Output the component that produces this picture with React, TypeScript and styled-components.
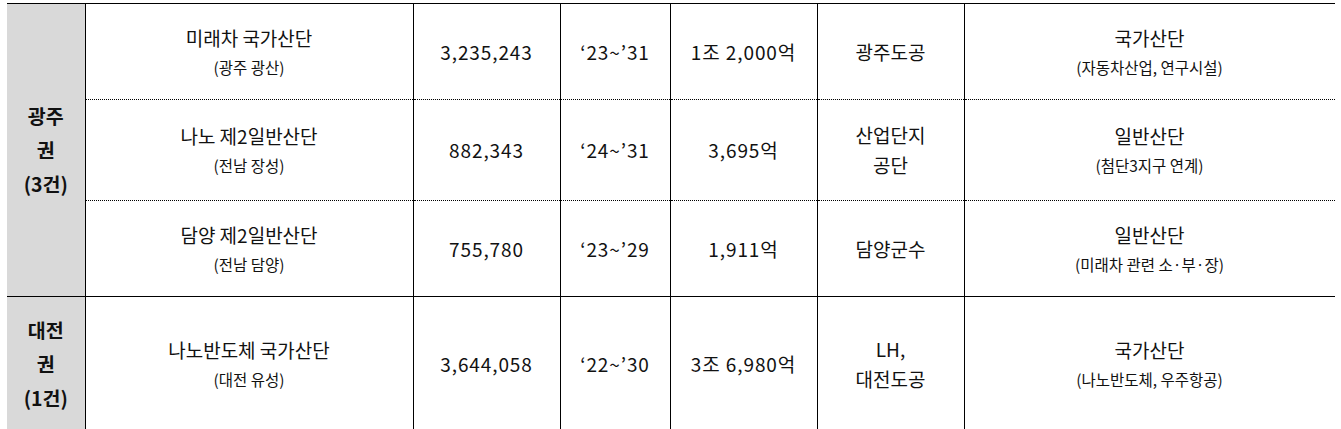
import React from 'react';
import styled, { createGlobalStyle } from 'styled-components';

// #region styles

const GlobalStyle = createGlobalStyle`
  html, body {
    margin: 0;
    padding: 0;
    background: #fff;
    overflow: hidden;
  }
  body {
    font-family: 'Noto Sans CJK KR', 'Noto Sans', sans-serif;
    color: #111;
  }
`;

const Page = styled.div`
  padding: 3px 0 0 7px;
`;

// 表の右端は罫線なしで切る
const Clip = styled.div`
  width: 1328px;
  overflow: hidden;
`;

const Table = styled.table`
  width: 1340px;
  border-collapse: collapse;
  table-layout: fixed;
  border-top: 1px solid #000;
`;

const RegionCell = styled.td`
  background: #d9d9d9;
  border-right: 1px solid #000;
  border-bottom: 1px solid #000;
  text-align: center;
  vertical-align: middle;
  font-weight: 700;
  font-size: 19.5px;
  line-height: 34px;
  padding: 0;
`;

// $last は区域の最後の行(実線)、それ以外は点線
const Cell = styled.td<{ $last: boolean; $edge?: boolean }>`
  border-bottom: 1px ${(p) => (p.$last ? 'solid' : 'dotted')} #000;
  border-right: 1px solid #000;
  text-align: center;
  vertical-align: middle;
  padding: 0 ${(p) => (p.$edge ? '12px' : '0')} 0 0;
  font-size: 19px;
  line-height: 30px;
`;

const Row = styled.tr<{ $height: number }>`
  height: ${(p) => p.$height}px;
`;

const MainText = styled.div`
  font-size: 19px;
  line-height: 30px;
`;

const SubText = styled.div`
  font-size: 15.5px;
  line-height: 28px;
`;

const NumberText = styled.span`
  letter-spacing: 0.9px;
`;

// #endregion styles

type Site = {
  name: string;
  place: string;
  area: string;
  period: string;
  cost: string;
  operator: string[];
  type: string;
  detail: string;
  height: number;
};

const regions: { label: string[]; sites: Site[] }[] = [
  {
    label: ['광주', '권', '(3건)'],
    sites: [
      { name: '미래차 국가산단', place: '(광주 광산)', area: '3,235,243', period: '‘23~’31', cost: '1조 2,000억', operator: ['광주도공'], type: '국가산단', detail: '(자동차산업, 연구시설)', height: 96 },
      { name: '나노 제2일반산단', place: '(전남 장성)', area: '882,343', period: '‘24~’31', cost: '3,695억', operator: ['산업단지', '공단'], type: '일반산단', detail: '(첨단3지구 연계)', height: 101 },
      { name: '담양 제2일반산단', place: '(전남 담양)', area: '755,780', period: '‘23~’29', cost: '1,911억', operator: ['담양군수'], type: '일반산단', detail: '(미래차 관련 소·부·장)', height: 96 },
    ],
  },
  {
    label: ['대전', '권', '(1건)'],
    sites: [
      { name: '나노반도체 국가산단', place: '(대전 유성)', area: '3,644,058', period: '‘22~’30', cost: '3조 6,980억', operator: ['LH,', '대전도공'], type: '국가산단', detail: '(나노반도체, 우주항공)', height: 135 },
    ],
  },
];

const SiteRow = (props: { site: Site; last: boolean; region?: string[]; span: number }) => {
  const s = props.site;
  return (
    <Row $height={s.height}>
      {props.region && (
        <RegionCell rowSpan={props.span}>
          {props.region.map((l) => (
            <div key={l}>{l}</div>
          ))}
        </RegionCell>
      )}
      <Cell $last={props.last}>
        <MainText>{s.name}</MainText>
        <SubText>{s.place}</SubText>
      </Cell>
      <Cell $last={props.last}>
        <NumberText>{s.area}</NumberText>
      </Cell>
      <Cell $last={props.last}>
        <NumberText>{s.period}</NumberText>
      </Cell>
      <Cell $last={props.last}>
        <NumberText>{s.cost}</NumberText>
      </Cell>
      <Cell $last={props.last}>
        {s.operator.map((o) => (
          <MainText key={o}>{o}</MainText>
        ))}
      </Cell>
      <Cell $last={props.last} $edge>
        <MainText>{s.type}</MainText>
        <SubText>{s.detail}</SubText>
      </Cell>
    </Row>
  );
};

export default function App() {
  return (
    <Page>
      <GlobalStyle />
      <Clip>
        <Table>
          <colgroup>
            <col style={{ width: 78 }} />
            <col style={{ width: 328 }} />
            <col style={{ width: 147 }} />
            <col style={{ width: 110 }} />
            <col style={{ width: 147 }} />
            <col style={{ width: 147 }} />
            <col style={{ width: 383 }} />
          </colgroup>
          <tbody>
            {regions.map((r) =>
              r.sites.map((s, i) => (
                <SiteRow
                  key={s.name}
                  site={s}
                  last={i === r.sites.length - 1}
                  region={i === 0 ? r.label : undefined}
                  span={r.sites.length}
                />
              ))
            )}
          </tbody>
        </Table>
      </Clip>
    </Page>
  );
}
